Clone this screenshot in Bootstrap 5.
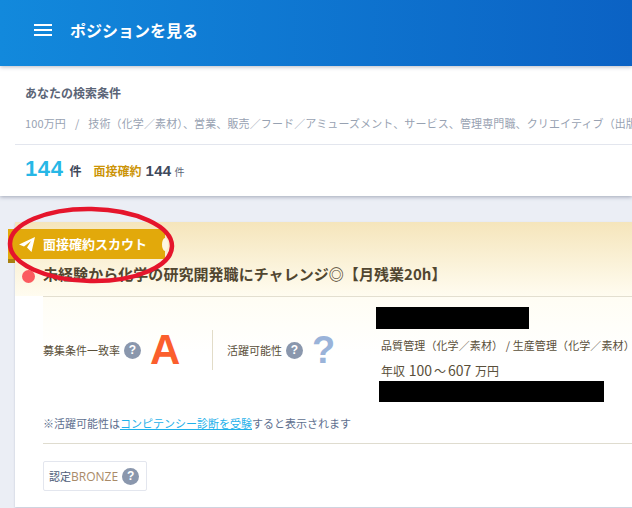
<!doctype html>
<html lang="ja"><head><meta charset="utf-8"><title>ポジションを見る</title>
<link href="https://cdn.jsdelivr.net/npm/bootstrap@5.3.0/dist/css/bootstrap.min.css" rel="stylesheet">
<style>
html,body{width:632px;height:508px;overflow:hidden}
body{background:#ebeef5;font-family:"Noto Sans CJK JP","Liberation Sans",sans-serif;position:relative}
.app-head{height:66px;background:linear-gradient(90deg,#1289dc,#0b62c4);padding:0 0 6px 34px;gap:18px;color:#fff;font-weight:700;font-size:16px;position:relative;z-index:2;box-shadow:0 1px 4px rgba(50,60,90,.35)}
.burger{width:18px;height:12px;border-top:2px solid #fff;border-bottom:2px solid #fff;position:relative}
.burger::after{content:"";position:absolute;left:0;right:0;top:3px;height:2px;background:#fff}
.search-panel{height:130px;background:#fff;box-shadow:0 1px 4px rgba(50,60,90,.4);white-space:nowrap;overflow:hidden}
.search-top{height:79px;margin-left:15px;padding:18px 0 0 10px;border-bottom:1px solid #e3e6ee}
.search-title{font-size:12px;font-weight:700;color:#5b6577;line-height:18px}
.search-cond{font-size:11px;color:#98a2b2;line-height:16px;margin-top:13px;letter-spacing:.12px}
.slash{margin:0 9px 0 9px}
.search-count{padding:11px 0 0 25px;color:#3f4a5c;line-height:26px}
.num-big{font:700 22px "Liberation Sans",sans-serif;color:#27b7e6;letter-spacing:.6px}
.ken{font-size:12px;font-weight:700;margin:0 12px 0 6px}
.gold{font-size:12px;font-weight:700;color:#cc9406}
.num-sm{font:700 15px "Liberation Sans",sans-serif;letter-spacing:.3px;margin:0 3px 0 4px}
.ken-sm{font-size:10px;color:#5b6577}
.job-card{position:absolute;left:15px;top:222px;width:640px;height:285px;background:#fff;box-shadow:0 1px 2px rgba(70,80,120,.25)}
.card-top{height:74px;background:linear-gradient(180deg,#f5e5bb,#fffcf0);padding:43px 0 0 28px;font-size:15px;font-weight:700;color:#514630;line-height:18px;white-space:nowrap;letter-spacing:.05px}
.dot{position:absolute;left:7px;top:48px;width:13px;height:13px;border-radius:50%;background:#fb5b5f}
.card-mid{height:148px;margin-left:28px;border-top:1px solid #e3dfd0;border-bottom:1px solid #dfdccf;background:linear-gradient(180deg,#fffdf4,#fff 40%)}
.metric-row{height:106px}
.metric{font-size:11px;color:#5a4f3a;white-space:nowrap}
.metric-second{width:149px}
.q{width:17px;height:17px;border-radius:50%;background:#8a97ad;color:#fff;font:700 12px/17px "Liberation Sans",sans-serif;text-align:center;display:inline-block;flex:none}
.grade{font:700 42px/40px "Liberation Sans",sans-serif;color:#fb5e2d;margin-left:5px;width:30px}
.grade-q{font:700 38px/40px "Liberation Sans",sans-serif;color:#9ab3d9;margin-left:5px}
.sep{width:1px;height:40px;background:#e2dcc8;margin:0 14px 0 32px}
.job-info{width:256px;white-space:nowrap;color:#5a4f3a;align-self:flex-start;padding-top:10px}
.redact{background:#000;height:22px}
.r1{width:153px}
.r2{width:225px;height:21px;margin:1px 0 0 3px}
.info-a{font-size:11px;line-height:16px;margin:8px 0 0 5px;letter-spacing:.1px}
.paren-end{letter-spacing:-5px}
.info-b{font-size:12px;line-height:18px;margin:8px 0 0 5px}
.info-b b{font-weight:400;font-size:14px;margin:0 1px}
.tilde{margin:0 1px}
.note{font-size:11px;color:#60708f;line-height:16px;margin-top:12px}
.note a{color:#1fb1ea}
.cert{margin:17px 0 0 28px;width:104px;height:30px;border:1px solid #e3e6ee;border-radius:2px;padding-left:5px;gap:4px;font-size:11px;color:#4e5d78;white-space:nowrap}
.bronze{color:#a98a68;font:12px "Open Sans",sans-serif;margin-left:-4px}
.scout-tag{position:absolute;left:8px;top:229px;width:157px;height:30px;background:#e2a90b;color:#fff;font-size:13px;font-weight:700;padding:0 0 1px 35px;white-space:nowrap}
.scout-tag::after{content:"";position:absolute;right:-3px;top:9px;width:6px;height:13px;background:#fdf6e2;border-radius:50%}
.scout-fold{position:absolute;left:8px;top:259px;width:7px;height:4px;background:#a9810f}
.scout-tag svg{position:absolute;left:11px;top:8px}
.circle-mark{position:absolute;left:5px;top:205px;z-index:5}
</style></head>
<body>
<header class="app-head d-flex align-items-center">
  <span class="burger"></span><span>ポジションを見る</span>
</header>
<section class="search-panel">
  <div class="search-top">
    <div class="search-title">あなたの検索条件</div>
    <div class="search-cond">100万円<span class="slash">/</span>技術（化学／素材）、営業、販売／フード／アミューズメント、サービス、管理専門職、クリエイティブ（出版</div>
  </div>
  <div class="search-count"><span class="num-big">144</span><span class="ken">件</span><span class="gold">面接確約</span><span class="num-sm">144</span><span class="ken-sm">件</span></div>
</section>
<article class="job-card">
  <div class="card-top"><span class="dot"></span>未経験から化学の研究開発職にチャレンジ◎【月残業20h】</div>
  <div class="card-mid d-flex flex-column">
    <div class="metric-row d-flex align-items-center">
      <div class="metric d-flex align-items-center gap-1">募集条件一致率 <span class="q">?</span><span class="grade">A</span></div>
      <span class="sep"></span>
      <div class="metric metric-second d-flex align-items-center gap-1">活躍可能性 <span class="q">?</span><span class="grade-q">?</span></div>
      <div class="job-info">
        <div class="redact r1"></div>
        <div class="info-a">品質管理（化学／素材） / 生産管理（化学／素材<span class="paren-end">）</span></div>
        <div class="info-b">年収 <b>100</b><span class="tilde">～</span><b>607</b> 万円</div>
        <div class="redact r2"></div>
      </div>
    </div>
    <div class="note">※活躍可能性は<a href="#">コンピテンシー診断を受験</a>すると表示されます</div>
  </div>
  <div class="cert d-flex align-items-center"><span>認定</span><span class="bronze">BRONZE</span><span class="q">?</span></div>
</article>
<div class="scout-tag d-flex align-items-center">
  <svg width="16" height="15" viewBox="0 0 16 15"><path d="M0 7.5 16 0 12.5 15 8 10.5 12 4 5 9.5Z" fill="#fff"/></svg>
  面接確約スカウト
</div>
<span class="scout-fold"></span>
<svg class="circle-mark" width="174" height="82" viewBox="0 0 174 82"><ellipse cx="86" cy="40" rx="81" ry="36" fill="none" stroke="#e5152c" stroke-width="4.5" transform="rotate(1 86 40)"/></svg>
</body></html>
